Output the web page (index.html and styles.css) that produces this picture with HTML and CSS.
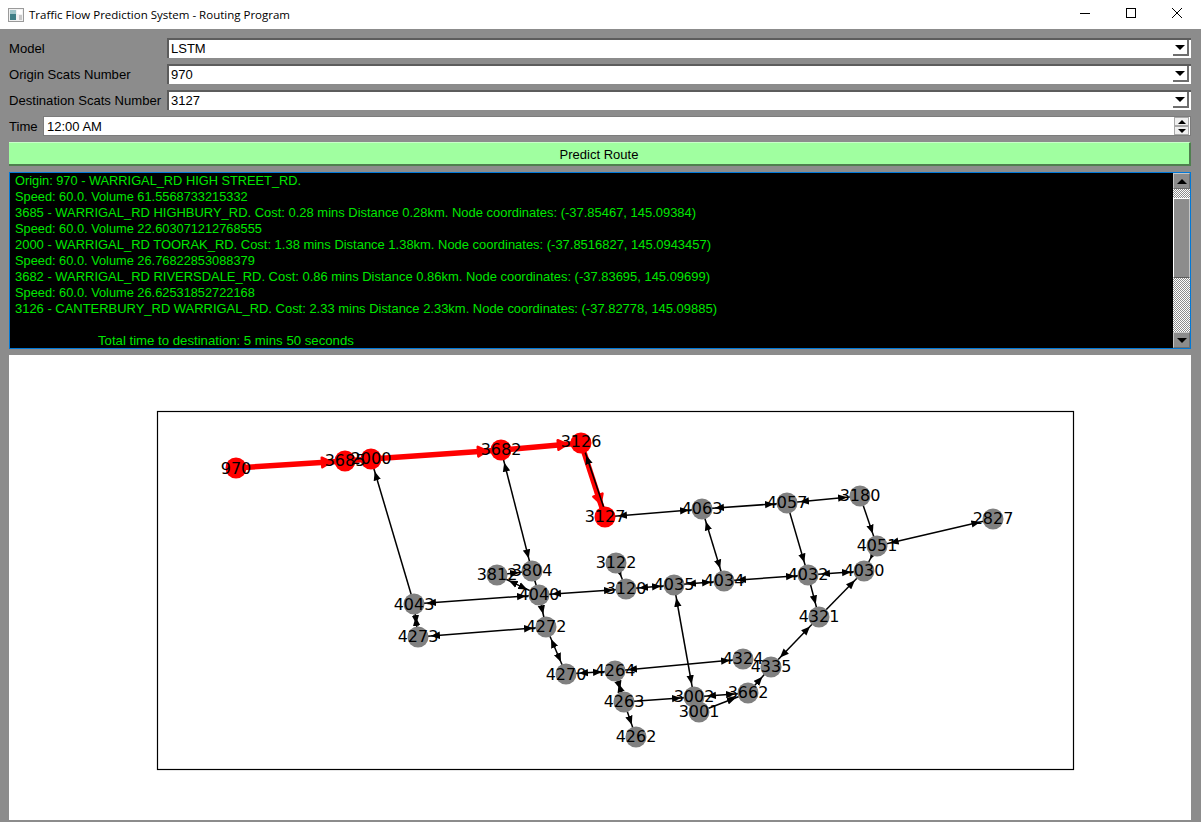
FILE: index.html
```html
<!DOCTYPE html>
<html lang="en">
<head>
    <meta charset="UTF-8">
    <meta name="viewport" content="width=device-width, initial-scale=1.0">
    <title>Traffic Flow Prediction System - Routing Program</title>
    <link rel="stylesheet" href="styles.css">
</head>
<body>
    <!-- Window title bar -->
    <div class="titlebar">
        <svg class="app-icon" width="16" height="16" viewBox="0 0 16 16">
            <rect x="0.5" y="1.5" width="15" height="13" fill="#f2f2f2" stroke="#9a9a9a"/>
            <rect x="2" y="3" width="6" height="10" fill="#3f7f86"/>
            <rect x="2" y="3" width="6" height="4" fill="#9fc4c8"/>
            <rect x="9" y="3" width="5" height="4" fill="#ffffff"/>
            <rect x="11" y="8" width="3" height="5" fill="#c9c9c9"/>
        </svg>
        <span class="title-text">Traffic Flow Prediction System - Routing Program</span>
        <div class="window-buttons">
            <svg class="win-btn" width="46" height="29" viewBox="0 0 46 29"><path d="M18 13.5h10" stroke="#000" fill="none"/></svg>
            <svg class="win-btn" width="46" height="29" viewBox="0 0 46 29"><rect x="18.5" y="8.5" width="9" height="9" stroke="#000" fill="none"/></svg>
            <svg class="win-btn" width="46" height="29" viewBox="0 0 46 29"><path d="M18 8l10 10M28 8l-10 10" stroke="#000" fill="none"/></svg>
        </div>
    </div>

    <div class="content">
        <div class="row">
            <label class="field-label">Model</label>
            <div class="combo"><span class="combo-value">LSTM</span><span class="combo-arrow"><i class="tri-down"></i></span></div>
        </div>
        <div class="row">
            <label class="field-label">Origin Scats Number</label>
            <div class="combo"><span class="combo-value">970</span><span class="combo-arrow"><i class="tri-down"></i></span></div>
        </div>
        <div class="row">
            <label class="field-label">Destination Scats Number</label>
            <div class="combo"><span class="combo-value">3127</span><span class="combo-arrow"><i class="tri-down"></i></span></div>
        </div>
        <div class="row">
            <label class="time-label">Time</label>
            <div class="spin">
                <span class="spin-value">12:00 AM</span>
                <span class="spin-buttons">
                    <span class="spin-btn"><i class="tri-up small"></i></span>
                    <span class="spin-btn"><i class="tri-down small"></i></span>
                </span>
            </div>
        </div>

        <button class="predict">Predict Route</button>

        <!-- Route output -->
        <div class="log">
            <div class="log-text">
                <div class="log-short">Origin: 970 - WARRIGAL_RD HIGH STREET_RD.</div>
                <div class="log-short">Speed: 60.0. Volume 61.5568733215332</div>
                <div>3685 - WARRIGAL_RD HIGHBURY_RD. Cost: 0.28 mins Distance 0.28km. Node coordinates: (-37.85467, 145.09384)</div>
                <div class="log-short">Speed: 60.0. Volume 22.603071212768555</div>
                <div>2000 - WARRIGAL_RD TOORAK_RD. Cost: 1.38 mins Distance 1.38km. Node coordinates: (-37.8516827, 145.0943457)</div>
                <div class="log-short">Speed: 60.0. Volume 26.76822853088379</div>
                <div>3682 - WARRIGAL_RD RIVERSDALE_RD. Cost: 0.86 mins Distance 0.86km. Node coordinates: (-37.83695, 145.09699)</div>
                <div class="log-short">Speed: 60.0. Volume 26.62531852722168</div>
                <div>3126 - CANTERBURY_RD WARRIGAL_RD. Cost: 2.33 mins Distance 2.33km. Node coordinates: (-37.82778, 145.09885)</div>
                <div class="log-blank"></div>
                <div class="log-total">Total time to destination: 5 mins 50 seconds</div>
            </div>
            <div class="scrollbar">
                <span class="scroll-btn"><i class="tri-up"></i></span>
                <span class="scroll-track top"></span>
                <span class="scroll-thumb"></span>
                <span class="scroll-track bottom"></span>
                <span class="scroll-btn"><i class="tri-down"></i></span>
            </div>
        </div>

        <!-- Route graph, drawn in window coordinates -->
        <div class="chart">
            <svg class="graph" width="1182" height="465" viewBox="9 355 1182 465">
                <defs>
                    <marker id="head" markerUnits="userSpaceOnUse" markerWidth="24" markerHeight="8" refX="22" refY="4" orient="auto-start-reverse">
                        <path d="M0 0.3L9 4L0 7.7Z" fill="#000"/>
                    </marker>
                    <marker id="head-red" markerUnits="userSpaceOnUse" markerWidth="28" markerHeight="16" refX="25" refY="8" orient="auto">
                        <path d="M2 3.2L11 8L2 12.8Z" fill="#f00" stroke="#f00" stroke-width="2.5" stroke-linejoin="round"/>
                    </marker>
                </defs>

                <rect class="frame" x="157.5" y="411.5" width="916" height="358"/>

                <g class="route" marker-end="url(#head-red)">
                    <line x1="236" y1="468" x2="345" y2="461"/>
                    <line x1="345" y1="461" x2="371" y2="459"/>
                    <line x1="371" y1="459" x2="501" y2="450"/>
                    <line x1="501" y1="450" x2="581" y2="443"/>
                    <line x1="581" y1="443" x2="605" y2="517"/>
                </g>

                <g class="edges" marker-end="url(#head)">
                    <line x1="607" y1="517" x2="582" y2="443"/>
                    <line x1="414" y1="604" x2="371" y2="459"/>
                    <line x1="860" y1="496" x2="877" y2="546"/>
                    <line x1="877" y1="546" x2="864" y2="571"/>
                    <line x1="787" y1="503" x2="808" y2="575"/>
                    <line x1="616" y1="563" x2="626" y2="589"/>
                    <line x1="497" y1="575" x2="532" y2="571"/>
                    <line x1="532" y1="571" x2="539" y2="595"/>
                    <line x1="539" y1="595" x2="546" y2="627"/>
                    <line x1="624" y1="702" x2="636" y2="737"/>
                    <line x1="624" y1="702" x2="694" y2="697"/>
                    <line x1="699" y1="712" x2="748" y2="693"/>
                    <line x1="748" y1="693" x2="771" y2="667"/>
                    <line x1="808" y1="575" x2="819" y2="617"/>
                    <line x1="819" y1="617" x2="864" y2="571"/>
                </g>

                <g class="edges" marker-start="url(#head)" marker-end="url(#head)">
                    <line x1="532" y1="571" x2="501" y2="450"/>
                    <line x1="605" y1="517" x2="702" y2="509"/>
                    <line x1="702" y1="509" x2="787" y2="503"/>
                    <line x1="787" y1="503" x2="860" y2="496"/>
                    <line x1="877" y1="546" x2="993" y2="519"/>
                    <line x1="702" y1="509" x2="724" y2="581"/>
                    <line x1="724" y1="581" x2="808" y2="575"/>
                    <line x1="808" y1="575" x2="864" y2="571"/>
                    <line x1="674" y1="585" x2="724" y2="581"/>
                    <line x1="626" y1="589" x2="674" y2="585"/>
                    <line x1="539" y1="595" x2="626" y2="589"/>
                    <line x1="414" y1="604" x2="539" y2="595"/>
                    <line x1="497" y1="575" x2="539" y2="595"/>
                    <line x1="414" y1="604" x2="418" y2="637"/>
                    <line x1="418" y1="637" x2="546" y2="627"/>
                    <line x1="546" y1="627" x2="566" y2="674"/>
                    <line x1="566" y1="674" x2="615" y2="671"/>
                    <line x1="615" y1="671" x2="743" y2="659"/>
                    <line x1="615" y1="671" x2="624" y2="702"/>
                    <line x1="694" y1="697" x2="748" y2="693"/>
                    <line x1="674" y1="585" x2="694" y2="697"/>
                    <line x1="819" y1="617" x2="771" y2="667"/>
                </g>

                <g class="nodes">
                    <circle cx="414" cy="604" r="10.5"/>
                    <circle cx="418" cy="637" r="10.5"/>
                    <circle cx="497" cy="575" r="10.5"/>
                    <circle cx="532" cy="571" r="10.5"/>
                    <circle cx="539" cy="595" r="10.5"/>
                    <circle cx="546" cy="627" r="10.5"/>
                    <circle cx="566" cy="674" r="10.5"/>
                    <circle cx="615" cy="671" r="10.5"/>
                    <circle cx="624" cy="702" r="10.5"/>
                    <circle cx="636" cy="737" r="10.5"/>
                    <circle cx="616" cy="563" r="10.5"/>
                    <circle cx="626" cy="589" r="10.5"/>
                    <circle cx="674" cy="585" r="10.5"/>
                    <circle cx="724" cy="581" r="10.5"/>
                    <circle cx="702" cy="509" r="10.5"/>
                    <circle cx="787" cy="503" r="10.5"/>
                    <circle cx="860" cy="496" r="10.5"/>
                    <circle cx="993" cy="519" r="10.5"/>
                    <circle cx="877" cy="546" r="10.5"/>
                    <circle cx="864" cy="571" r="10.5"/>
                    <circle cx="808" cy="575" r="10.5"/>
                    <circle cx="819" cy="617" r="10.5"/>
                    <circle cx="743" cy="659" r="10.5"/>
                    <circle cx="771" cy="667" r="10.5"/>
                    <circle cx="748" cy="693" r="10.5"/>
                    <circle cx="694" cy="697" r="10.5"/>
                    <circle cx="699" cy="712" r="10.5"/>
                </g>
                <g class="nodes on-route">
                    <circle cx="236" cy="468" r="10.5"/>
                    <circle cx="345" cy="461" r="10.5"/>
                    <circle cx="371" cy="459" r="10.5"/>
                    <circle cx="501" cy="450" r="10.5"/>
                    <circle cx="581" cy="443" r="10.5"/>
                    <circle cx="605" cy="517" r="10.5"/>
                </g>

                <g class="labels">
                    <text x="236" y="468">970</text>
                    <text x="345" y="460">3685</text>
                    <text x="371" y="458">2000</text>
                    <text x="501" y="449">3682</text>
                    <text x="581" y="441">3126</text>
                    <text x="605" y="516">3127</text>
                    <text x="702" y="508">4063</text>
                    <text x="787" y="502">4057</text>
                    <text x="860" y="495">3180</text>
                    <text x="993" y="518">2827</text>
                    <text x="877" y="545">4051</text>
                    <text x="864" y="570">4030</text>
                    <text x="808" y="574">4032</text>
                    <text x="724" y="580">4034</text>
                    <text x="674" y="584">4035</text>
                    <text x="626" y="588">3120</text>
                    <text x="616" y="562">3122</text>
                    <text x="532" y="570">3804</text>
                    <text x="497" y="574">3812</text>
                    <text x="539" y="594">4040</text>
                    <text x="414" y="604">4043</text>
                    <text x="418" y="636">4273</text>
                    <text x="546" y="626">4272</text>
                    <text x="819" y="616">4321</text>
                    <text x="771" y="666">4335</text>
                    <text x="743" y="658">4324</text>
                    <text x="566" y="674">4270</text>
                    <text x="615" y="670">4264</text>
                    <text x="624" y="701">4263</text>
                    <text x="636" y="736">4262</text>
                    <text x="694" y="696">3002</text>
                    <text x="699" y="711">3001</text>
                    <text x="748" y="692">3662</text>
                </g>
            </svg>
        </div>
    </div>
</body>
</html>
```

FILE: styles.css
```css
* {
    box-sizing: border-box;
}

html, body {
    height: 100%;
}

body {
    margin: 0;
    display: flex;
    flex-direction: column;
    overflow: hidden;
    background-color: #8c8c8c;
    font-family: "Liberation Sans", Arial, sans-serif;
    font-size: 13px;
    color: #000;
}

/* Title bar */
.titlebar {
    height: 29px;
    flex: none;
    display: flex;
    align-items: center;
    background-color: #fff;
    padding-left: 8px;
}

.app-icon {
    flex: none;
}

.title-text {
    margin-left: 5px;
    font-family: "Open Sans", sans-serif;
    font-size: 11.5px;
    color: #000;
}

.window-buttons {
    margin-left: auto;
    display: flex;
    padding-right: 1px;
}

.win-btn {
    display: block;
}

/* Main area */
.content {
    flex: 1;
    min-height: 0;
    display: flex;
    flex-direction: column;
    gap: 6px;
    padding: 9px 10px 2px 9px;
}

.row {
    display: flex;
    height: 20px;
    align-items: stretch;
}

.field-label {
    width: 158px;
    flex: none;
    padding-top: 1px;
    font-size: 13.1px;
    line-height: 20px;
    white-space: nowrap;
}

.time-label {
    width: 34px;
    flex: none;
    padding-top: 1px;
    font-size: 13.1px;
    line-height: 20px;
}

.combo {
    flex: 1;
    display: flex;
    align-items: flex-start;
    background-color: #fff;
    border-top: 2px solid #5c5c5c;
    border-left: 2px solid #5c5c5c;
}

.combo-value {
    flex: 1;
    padding-left: 2px;
    line-height: 17px;
}

.combo-arrow {
    width: 16px;
    height: 16px;
    margin-right: 2px;
    display: flex;
    align-items: center;
    justify-content: center;
    border-right: 2px solid #6e6e6e;
    border-bottom: 2px solid #6e6e6e;
}

.tri-down, .tri-up {
    display: block;
    width: 0;
    height: 0;
    border-left: 5px solid transparent;
    border-right: 5px solid transparent;
}

.tri-down {
    border-top: 5px solid #000;
}

.tri-up {
    border-bottom: 5px solid #000;
}

.tri-down.small {
    border-left-width: 4px;
    border-right-width: 4px;
    border-top-width: 4px;
}

.tri-up.small {
    border-left-width: 4px;
    border-right-width: 4px;
    border-bottom-width: 4px;
}

.spin {
    flex: 1;
    display: flex;
    background-color: #fff;
    border: 1px solid #7c7c7c;
}

.spin-value {
    flex: 1;
    padding-left: 3px;
    line-height: 19px;
}

.spin-buttons {
    width: 15px;
    margin-right: 1px;
    display: flex;
    flex-direction: column;
}

.spin-btn {
    flex: 1;
    display: flex;
    align-items: center;
    justify-content: center;
    background-color: #efefef;
    border: 1px solid #a8a8a8;
}

.predict {
    height: 24px;
    flex: none;
    padding: 2px 0 0;
    background-color: #a0ffa0;
    border: 0;
    border-top: 1px solid #c8ffc8;
    border-right: 2px solid #4f7f4f;
    border-bottom: 2px solid #4f7f4f;
    font-family: inherit;
    font-size: 13px;
    color: #000;
}

/* Output text */
.log {
    height: 177px;
    flex: none;
    display: flex;
    background-color: #000;
    border: 1px solid #0078d7;
}

.log-text {
    flex: 1;
    min-width: 0;
    overflow: hidden;
    padding-left: 5px;
    color: #00e600;
    font-size: 12.96px;
    line-height: 16px;
    white-space: nowrap;
}

.log-short {
    font-size: 12.8px;
}

.log-blank {
    height: 16px;
}

.log-total {
    padding-left: 83px;
    font-size: 13.2px;
}

.scrollbar {
    width: 17px;
    flex: none;
    display: flex;
    flex-direction: column;
}

.scroll-btn {
    height: 16px;
    flex: none;
    display: flex;
    align-items: center;
    justify-content: center;
    background-color: #8c8c8c;
    border: 1px solid #c4c4c4;
    border-right-color: #6e6e6e;
    border-bottom-color: #6e6e6e;
}

.scroll-track {
    background-color: #fff;
    background-image: repeating-conic-gradient(#8c8c8c 0 25%, #fff 0 50%);
    background-size: 2px 2px;
}

.scroll-track.top {
    height: 9px;
    flex: none;
}

.scroll-track.bottom {
    flex: 1;
}

.scroll-thumb {
    height: 80px;
    flex: none;
    background-color: #8c8c8c;
    border-top: 1px solid #fff;
    border-left: 1px solid #fff;
    border-right: 1px solid #c4c4c4;
    border-bottom: 1px solid #5c5c5c;
}

/* Graph */
.chart {
    flex: 1;
    min-height: 0;
    background-color: #fff;
}

.graph {
    display: block;
}

.frame {
    fill: none;
    stroke: #000;
    stroke-width: 1.2;
}

.route line {
    stroke: #f00;
    stroke-width: 5.5;
}

.edges line {
    stroke: #000;
    stroke-width: 1.5;
}

.nodes circle {
    fill: #808080;
}

.nodes.on-route circle {
    fill: #f00;
}

.labels text {
    font-family: "DejaVu Sans", sans-serif;
    font-size: 16px;
    text-anchor: middle;
    dominant-baseline: central;
    fill: #000;
}
```
